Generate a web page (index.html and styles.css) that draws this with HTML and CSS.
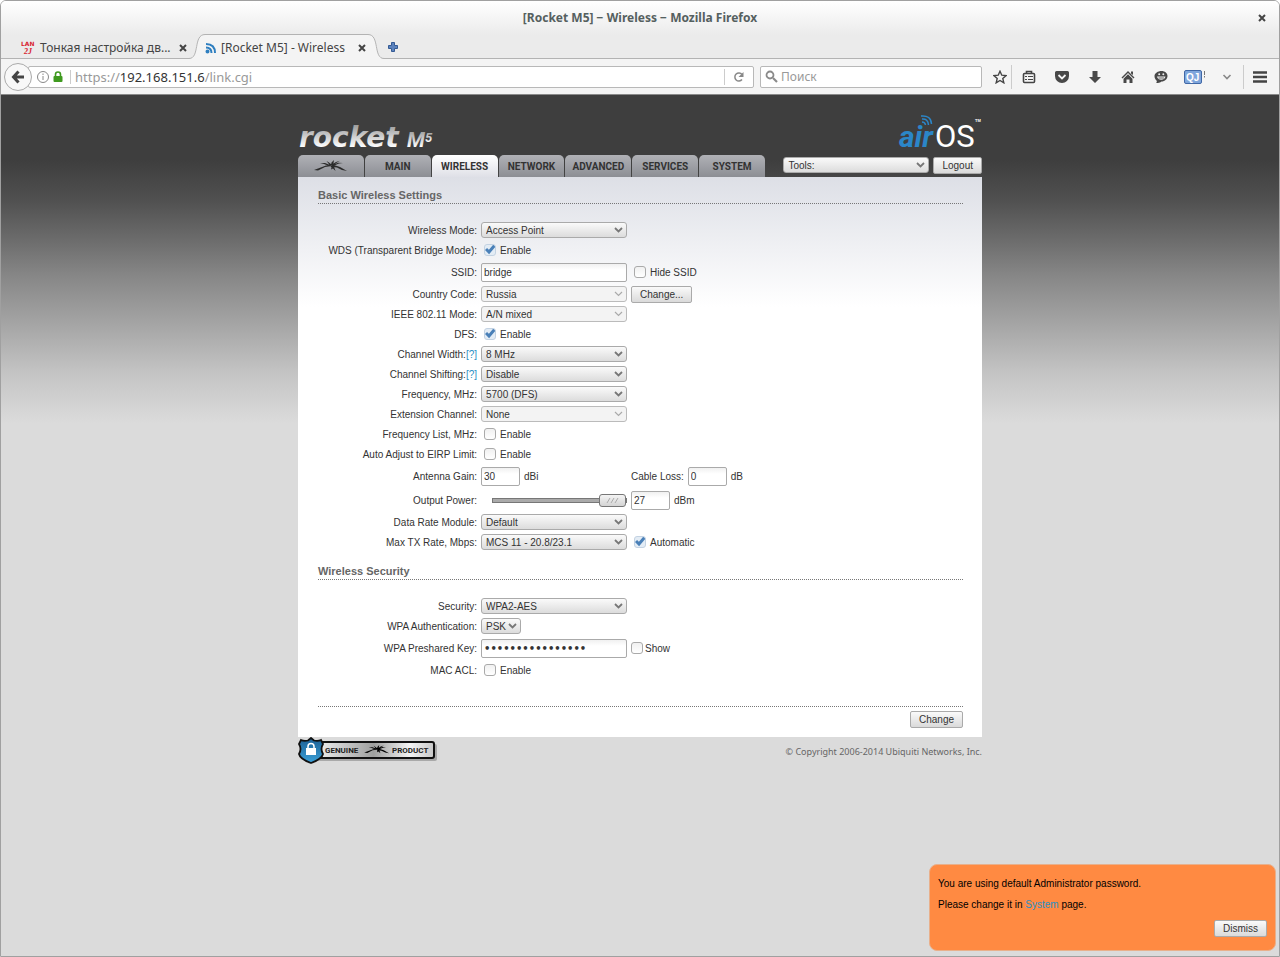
FILE: index.html
```html
<!DOCTYPE html>
<html lang="en">
<head>
    <meta charset="UTF-8">
    <meta name="viewport" content="width=device-width, initial-scale=1.0">
    <title>[Rocket M5] - Wireless</title>
    <link rel="stylesheet" href="styles.css">
</head>
<body>
    <svg width="0" height="0" class="defs" aria-hidden="true">
        <defs>
            <linearGradient id="silver" x1="0" y1="0" x2="0" y2="1">
                <stop offset="0" stop-color="#8a8a8a"/>
                <stop offset="0.8" stop-color="#ffffff"/>
            </linearGradient>
            <linearGradient id="plate" x1="0" y1="0" x2="1" y2="0">
                <stop offset="0" stop-color="#f4f4f4"/>
                <stop offset="0.5" stop-color="#9fa09f"/>
                <stop offset="0.8" stop-color="#f4f4f4"/>
                <stop offset="1" stop-color="#c8c8c8"/>
            </linearGradient>
            <linearGradient id="shield" x1="0" y1="0" x2="0" y2="1">
                <stop offset="0" stop-color="#1c5f94"/>
                <stop offset="1" stop-color="#3aa0d8"/>
            </linearGradient>
            <symbol id="bug" viewBox="0 0 34 12">
                <path d="M0 10L12 5.500L16 5L18 6L11 7L4 10.500ZM6 3L11 3L16 5L15 6L10 4ZM12.500 1L15 2.500L18 5L16 5.500ZM20 0L19.500 3L18.500 6L17 5L17.500 2.500ZM26 .800L23 2.500L19 5.500L18 4.500L22 2ZM29 3L25 3.500L19 6L19 5L24 2.800ZM17 5L20 5L26 7L33 11L28 10L23 7.500L19 7ZM16.500 6L19.500 6L20.500 8L21.500 11L19 8.500L17 9.500L17.500 7.500Z"/>
            </symbol>
        </defs>
    </svg>

    <div class="window">
        <!-- Browser chrome -->
        <header class="chrome">
            <div class="titlebar">
                <span class="title">[Rocket M5] − Wireless − Mozilla Firefox</span>
                <button class="close" aria-label="Close window">
                    <svg width="8" height="8" viewBox="0 0 8 8"><path d="M1 1L7 7M7 1L1 7" stroke="#444" stroke-width="2"/></svg>
                </button>
            </div>

            <div class="tabs">
                <div class="tab">
                    <svg width="15" height="14" viewBox="0 0 15 14" fill="#d8232f">
                        <text x="0" y="5" class="lan">LAN</text>
                        <text x="3" y="13" class="lan-sub">2J</text>
                    </svg>
                    <span class="tab-text">Тонкая настройка дв...</span>
                    <button class="close" aria-label="Close tab">
                        <svg width="8" height="8" viewBox="0 0 8 8"><path d="M1 1L7 7M7 1L1 7" stroke="#444" stroke-width="2"/></svg>
                    </button>
                </div>
                <svg class="curve" width="16" height="25" viewBox="0 0 16 25"><path d="M0 24.500C11 24.500 4 .500 16 .500V25H0Z" fill="#f4f4f4"/><path d="M0 24.500C11 24.500 4 .500 16 .500" fill="none" stroke="#b3b3b3"/></svg>
                <div class="tab active">
                    <svg width="12" height="12" viewBox="0 0 12 12" fill="none" stroke="#2f7fc0" stroke-width="2"><circle cx="2.500" cy="9.500" r="1"/><path d="M1 5.500Q6.500 5.500 6.500 11M1 2Q10 2 10 11"/></svg>
                    <span class="tab-text">[Rocket M5] - Wireless</span>
                    <button class="close" aria-label="Close tab">
                        <svg width="8" height="8" viewBox="0 0 8 8"><path d="M1 1L7 7M7 1L1 7" stroke="#444" stroke-width="2"/></svg>
                    </button>
                </div>
                <svg class="curve" width="16" height="25" viewBox="0 0 16 25"><path d="M16 24.500C5 24.500 12 .500 0 .500V25H16Z" fill="#f4f4f4"/><path d="M16 24.500C5 24.500 12 .500 0 .500" fill="none" stroke="#b3b3b3"/></svg>
                <button class="new-tab" aria-label="New tab">
                    <svg width="12" height="12" viewBox="0 0 12 12"><path d="M4.500 1.500h3v3h3v3h-3v3h-3v-3h-3v-3h3Z" fill="#5b82bd" stroke="#345a94"/></svg>
                </button>
            </div>

            <div class="toolbar">
                <button class="back" aria-label="Back">
                    <svg width="14" height="14" viewBox="0 0 14 14" fill="none" stroke="#444" stroke-width="3"><path d="M2.500 7H13M7.500 1.500L2.500 7L7.500 12.500"/></svg>
                </button>
                <div class="urlbar">
                    <svg width="12" height="12" viewBox="0 0 12 12" fill="none" stroke="#888"><circle cx="6" cy="6" r="5.500"/><path d="M6 5V9M6 2.500V4"/></svg>
                    <svg width="10" height="12" viewBox="0 0 10 12"><path d="M2.500 6V3.500a2.500 2.500 0 0 1 5 0V6" fill="none" stroke="#3f9a1f" stroke-width="1.600"/><rect x=".5" y="5" width="9" height="6" rx="1" fill="#3f9a1f"/></svg>
                    <div class="address">https://<b>192.168.151.6</b>/link.cgi</div>
                    <button class="reload" aria-label="Reload">
                        <svg width="12" height="12" viewBox="0 0 12 12"><path d="M9 8.500A4 4 0 1 1 9 3.500" fill="none" stroke="#888" stroke-width="1.500"/><path d="M10.500 1V6H5.500Z" fill="#888"/></svg>
                    </button>
                </div>
                <div class="search">
                    <svg width="13" height="13" viewBox="0 0 13 13" fill="none" stroke="#8a8a8a"><circle cx="5" cy="5" r="3.500" stroke-width="1.800"/><path d="M8 8L12 12" stroke-width="2.200"/></svg>
                    <input type="text" placeholder="Поиск" aria-label="Поиск">
                </div>
                <div class="icons">
                    <button class="star" aria-label="Bookmark">
                        <svg width="14" height="14" viewBox="0 0 14 14"><path d="M7 1.200L8.800 5.200L13 5.600L9.800 8.500L10.800 12.800L7 10.500L3.200 12.800L4.200 8.500L1 5.600L5.200 5.200Z" fill="none" stroke="#444" stroke-width="1.400"/></svg>
                    </button>
                    <button aria-label="Bookmarks list">
                        <svg width="14" height="14" viewBox="0 0 14 14" fill="none" stroke="#444"><rect x="1.500" y="3.500" width="11" height="9" rx="1" stroke-width="1.600"/><path d="M4.500 3V1.500h5V3" stroke-width="1.600"/><path d="M3 6.500h2M6 6.500h5M3 9.500h2M6 9.500h5"/></svg>
                    </button>
                    <button aria-label="Pocket">
                        <svg width="14" height="14" viewBox="0 0 14 14"><path d="M1.500 1h11a1.500 1.500 0 0 1 1.500 1.500V6a7 7 0 0 1-14 0V2.500A1.500 1.500 0 0 1 1.500 1Z" fill="#484848"/><path d="M3.500 5L7 8.500L10.500 5" fill="none" stroke="#f4f4f4" stroke-width="1.800"/></svg>
                    </button>
                    <button aria-label="Downloads">
                        <svg width="14" height="14" viewBox="0 0 14 14"><path d="M4.500 1h5v6H13L7 13L1 7h3.500Z" fill="#484848"/></svg>
                    </button>
                    <button aria-label="Home">
                        <svg width="14" height="14" viewBox="0 0 14 14"><path d="M7 1L13.500 7.500L12.500 8.500L7 3L1.500 8.500L.5 7.500Z" fill="#484848"/><path d="M7 4.200L11.500 8.700V13H8.500V9.500H5.500V13H2.500V8.700Z" fill="#484848"/><path d="M10 1.500h2V5L10 3.500Z" fill="#484848"/></svg>
                    </button>
                    <button aria-label="Chat">
                        <svg width="14" height="14" viewBox="0 0 14 14"><path d="M7.500 1C11 1 13.500 3.200 13.500 6S11 11.500 7.500 11.500C6.500 12.500 4 13 2 13C3 12.300 3 11.300 2.500 10.500C1 9 .5 7.500 .5 6C.5 3.200 4 1 7.500 1Z" fill="#484848"/><path d="M3 6.500H11.500Q10.500 9.800 7.200 9.800T3 6.500Z" fill="#eee"/><path d="M4.500 8H10" stroke="#484848" stroke-width=".800"/><circle cx="5.200" cy="4.300" r="1" fill="#eee"/><circle cx="9.300" cy="4.300" r="1" fill="#eee"/></svg>
                    </button>
                    <button aria-label="QuickJava">
                        <svg width="24" height="16" viewBox="0 0 24 16"><rect x="2.500" y="1.500" width="17" height="13" rx="1.500" fill="#7fa6dc" stroke="#4068a6"/><text x="4" y="12" class="qj">QJ</text><path d="M22.500 2V6M22.500 7V8.500" stroke="#777"/></svg>
                    </button>
                    <button aria-label="More">
                        <svg width="10" height="8" viewBox="0 0 10 8"><path d="M1.500 2L5 5.500L8.500 2" fill="none" stroke="#888" stroke-width="1.600"/></svg>
                    </button>
                    <button class="menu" aria-label="Menu">
                        <svg width="14" height="12" viewBox="0 0 14 12"><path d="M0 1.500h14M0 6h14M0 10.500h14" stroke="#444" stroke-width="2.400"/></svg>
                    </button>
                </div>
            </div>
        </header>

        <!-- airOS page -->
        <div class="page">
            <div class="content">
                <div class="logos">
                    <svg width="140" height="38" viewBox="0 0 140 38" role="img" aria-label="rocket M5">
                        <text x="1" y="30" class="rocket" fill="url(#silver)">rocket</text>
                        <text x="109" y="30" class="model" fill="url(#silver)">M</text>
                        <text x="127" y="25" class="model-num" fill="url(#silver)">5</text>
                    </svg>
                    <svg width="84" height="46" viewBox="0 0 84 46" role="img" aria-label="airOS">
                        <text x="1" y="38" class="air">air</text>
                        <text x="37" y="38" class="os">OS</text>
                        <text x="77" y="13" class="tm">TM</text>
                        <path d="M24 13Q27 13 27.500 16M24 10Q30 9.500 30.500 16M23 7Q33 6 33.500 15" fill="none" stroke="#2b86c8" stroke-width="1.500"/>
                    </svg>
                </div>

                <div class="topbar">
                    <nav class="nav">
                        <a href="#" aria-label="Ubiquiti"><svg width="34" height="12" fill="#2c2c2c"><use href="#bug"/></svg></a>
                        <a href="#">MAIN</a>
                        <a href="#" class="current">WIRELESS</a>
                        <a href="#">NETWORK</a>
                        <a href="#">ADVANCED</a>
                        <a href="#">SERVICES</a>
                        <a href="#">SYSTEM</a>
                    </nav>
                    <div class="tools">
                        <select aria-label="Tools"><option>Tools:</option></select>
                        <button class="btn">Logout</button>
                    </div>
                </div>

                <form class="panel">
                    <h2>Basic Wireless Settings</h2>
                    <div class="row">
                        <div class="name"><label for="mode">Wireless Mode:</label></div>
                        <select id="mode"><option>Access Point</option></select>
                    </div>
                    <div class="row">
                        <div class="name">WDS (Transparent Bridge Mode):</div>
                        <label class="check"><input type="checkbox" checked>Enable</label>
                    </div>
                    <div class="row tall">
                        <div class="name"><label for="ssid">SSID:</label></div>
                        <input type="text" id="ssid" value="bridge">
                        <label class="check"><input type="checkbox">Hide SSID</label>
                    </div>
                    <div class="row">
                        <div class="name"><label for="country">Country Code:</label></div>
                        <select id="country" disabled><option>Russia</option></select>
                        <div><button type="button" class="btn">Change...</button></div>
                    </div>
                    <div class="row">
                        <div class="name"><label for="ieee">IEEE 802.11 Mode:</label></div>
                        <select id="ieee" disabled><option>A/N mixed</option></select>
                    </div>
                    <div class="row">
                        <div class="name">DFS:</div>
                        <label class="check"><input type="checkbox" checked>Enable</label>
                    </div>
                    <div class="row">
                        <div class="name"><label for="width">Channel Width:</label><a href="#">[?]</a></div>
                        <select id="width"><option>8 MHz</option></select>
                    </div>
                    <div class="row">
                        <div class="name"><label for="shift">Channel Shifting:</label><a href="#">[?]</a></div>
                        <select id="shift"><option>Disable</option></select>
                    </div>
                    <div class="row">
                        <div class="name"><label for="freq">Frequency, MHz:</label></div>
                        <select id="freq"><option>5700 (DFS)</option></select>
                    </div>
                    <div class="row">
                        <div class="name"><label for="ext">Extension Channel:</label></div>
                        <select id="ext" disabled><option>None</option></select>
                    </div>
                    <div class="row">
                        <div class="name">Frequency List, MHz:</div>
                        <label class="check"><input type="checkbox">Enable</label>
                    </div>
                    <div class="row">
                        <div class="name">Auto Adjust to EIRP Limit:</div>
                        <label class="check"><input type="checkbox">Enable</label>
                    </div>
                    <div class="row tall">
                        <div class="name"><label for="gain">Antenna Gain:</label></div>
                        <div class="group"><input type="text" class="small" id="gain" value="30">dBi</div>
                        <div class="group"><label for="loss">Cable Loss:</label><input type="text" class="small" id="loss" value="0">dB</div>
                    </div>
                    <div class="row tall">
                        <div class="name"><label for="power">Output Power:</label></div>
                        <input type="range" id="power" min="0" max="27" value="27">
                        <div class="group"><input type="text" class="small" value="27" aria-label="Output power, dBm">dBm</div>
                    </div>
                    <div class="row">
                        <div class="name"><label for="rate">Data Rate Module:</label></div>
                        <select id="rate"><option>Default</option></select>
                    </div>
                    <div class="row">
                        <div class="name"><label for="mcs">Max TX Rate, Mbps:</label></div>
                        <select id="mcs"><option>MCS 11 - 20.8/23.1</option></select>
                        <label class="check"><input type="checkbox" checked>Automatic</label>
                    </div>

                    <h2>Wireless Security</h2>
                    <div class="row">
                        <div class="name"><label for="security">Security:</label></div>
                        <select id="security"><option>WPA2-AES</option></select>
                    </div>
                    <div class="row">
                        <div class="name"><label for="auth">WPA Authentication:</label></div>
                        <select id="auth" class="short"><option>PSK</option></select>
                    </div>
                    <div class="row tall">
                        <div class="name"><label for="key">WPA Preshared Key:</label></div>
                        <input type="password" id="key" value="0123456789abcdef">
                        <label class="check tight"><input type="checkbox">Show</label>
                    </div>
                    <div class="row">
                        <div class="name">MAC ACL:</div>
                        <label class="check"><input type="checkbox">Enable</label>
                    </div>

                    <div class="submit"><button type="button" class="btn">Change</button></div>
                </form>

                <footer class="footer">
                    <svg width="140" height="28" viewBox="0 0 140 28" role="img" aria-label="Genuine product">
                        <rect x="16" y="7" width="123" height="17" rx="2" fill="#a9a9a9"/>
                        <rect x="15" y="5" width="121" height="16" rx="2" fill="url(#plate)" stroke="#111" stroke-width="2"/>
                        <path d="M13 1L16 3.500Q20 4.500 23 3L25 7Q22 12 25 17Q24 22 13 26Q2 22 1 17Q4 12 1 7L3 3Q6 4.500 10 3.500Z" fill="url(#shield)" stroke="#111" stroke-width="1.800"/>
                        <path d="M10 12V9.500a3 3 0 0 1 6 0V12" fill="none" stroke="#fff" stroke-width="1.500"/>
                        <rect x="8" y="11" width="10" height="7" fill="#fff"/>
                        <text x="27" y="16" class="plate-text">GENUINE</text>
                        <use href="#bug" x="66" y="8" width="26" height="9"/>
                        <text x="94" y="16" class="plate-text">PRODUCT</text>
                    </svg>
                    <span>© Copyright 2006-2014 Ubiquiti Networks, Inc.</span>
                </footer>
            </div>

            <div class="notice">
                <p>You are using default Administrator password.</p>
                <p>Please change it in <a href="#">System</a> page.</p>
                <button class="btn">Dismiss</button>
            </div>
        </div>
    </div>
</body>
</html>
```

FILE: styles.css
```css
* {
    box-sizing: border-box;
}

body {
    margin: 0;
    background-color: #fff;
    font-family: "Liberation Sans", Arial, sans-serif;
    font-size: 10px;
    color: #333;
}

.defs {
    position: absolute;
}

svg {
    display: block;
    flex: none;
}

a {
    color: #2a8fc4;
    text-decoration: none;
}

button {
    display: flex;
    align-items: center;
    justify-content: center;
    border: none;
    padding: 0;
    background: none;
    font: inherit;
    color: inherit;
}

.window {
    display: flex;
    flex-direction: column;
    min-height: 100vh;
    border: 1px solid #a0a0a0;
    border-radius: 6px 6px 0 0;
    overflow: hidden;
}

/* Browser chrome */
.chrome {
    font-family: "Noto Sans", "Open Sans", sans-serif;
    font-size: 12px;
    color: #444;
    background: linear-gradient(#fff, #ebebeb 34px, #ebebeb);
}

.titlebar {
    display: grid;
    grid-template-columns: 1fr auto 1fr;
    align-items: center;
    height: 33px;
}

.title {
    grid-column: 2;
    font-weight: bold;
    color: #55605f;
}

.titlebar .close {
    justify-self: end;
    margin-right: 13px;
}

.tabs {
    display: flex;
    align-items: flex-end;
    height: 25px;
    padding-left: 20px;
    box-shadow: inset 0 -1px #b3b3b3;
}

.tab {
    display: flex;
    align-items: center;
    gap: 4px;
    height: 25px;
    width: 168px;
    padding-top: 2px;
}

.tab-text {
    white-space: nowrap;
}

.tab .close {
    margin-left: auto;
    padding-right: 2px;
}

.tab.active {
    width: 163px;
    padding-top: 1px;
    border-top: 1px solid #b3b3b3;
    background-color: #f4f4f4;
}

.lan {
    font: bold 6px "DejaVu Sans", sans-serif;
}

.lan-sub {
    font: italic bold 8px "Liberation Serif", serif;
}

.new-tab {
    height: 25px;
    padding: 0 3px;
}

.toolbar {
    display: flex;
    align-items: center;
    height: 36px;
    padding: 0 3px;
    background-color: #f4f4f4;
    border-bottom: 1px solid #8a8a8a;
}

.back {
    position: relative;
    width: 28px;
    height: 28px;
    margin-right: -4px;
    border: 1px solid #aaa;
    border-radius: 50%;
    background-color: #f8f8f8;
}

.urlbar,
.search {
    display: flex;
    align-items: center;
    height: 22px;
    border: 1px solid #b8b8b8;
    border-radius: 2px;
    background-color: #fff;
}

.urlbar {
    flex: 1;
    gap: 4px;
    padding-left: 8px;
}

.address {
    flex: 1;
    margin-left: 3px;
    padding-left: 4px;
    border-left: 1px solid #ccc;
    font-size: 13px;
    line-height: 14px;
    color: #999;
}

.address b {
    font-weight: normal;
    color: #333;
}

.reload {
    width: 29px;
    height: 16px;
    border-left: 1px solid #ccc;
}

.search {
    width: 222px;
    margin-left: 6px;
    padding: 0 4px;
    gap: 3px;
}

.search input {
    flex: 1;
    min-width: 0;
    border: none;
    padding: 0;
    background: none;
    font: inherit;
}

.search input::placeholder {
    color: #999;
}

.icons {
    display: flex;
    align-items: center;
    margin-left: 6px;
}

.icons button {
    width: 33px;
    height: 24px;
}

.icons .star {
    width: 24px;
    border-right: 1px solid #ccc;
}

.icons .menu {
    border-left: 1px solid #ccc;
}

.qj {
    font: bold 10px "Liberation Sans", sans-serif;
    fill: #fff;
}

/* airOS page */
.page {
    flex: 1;
    background: #dbdbdb linear-gradient(#3e3e3e, #3e3e3e 65px, #505050 105px, #6c6c6c 145px, #868686 180px, #a4a4a4 228px, #c4c4c4 278px, #dbdbdb 328px);
}

.content {
    max-width: 684px;
    margin: 0 auto;
}

.logos {
    display: flex;
    justify-content: space-between;
    align-items: flex-end;
    height: 60px;
}

.rocket {
    font: italic bold 28px "DejaVu Sans", sans-serif;
}

.model {
    font: italic bold 21px Roboto, sans-serif;
}

.model-num {
    font: italic bold 13px Roboto, sans-serif;
}

.air {
    font: italic bold 30px Roboto, sans-serif;
    fill: #2b86c8;
}

.os {
    font: 31px Roboto, sans-serif;
    fill: #fff;
}

.tm {
    font: bold 4px "Liberation Sans", sans-serif;
    fill: #fff;
}

.topbar {
    display: flex;
    justify-content: space-between;
}

.nav {
    display: flex;
    gap: 1px;
    width: 467px;
}

.nav a {
    display: flex;
    flex: 1;
    align-items: center;
    justify-content: center;
    height: 22px;
    border-radius: 5px 5px 0 0;
    background: linear-gradient(#b0b1b6, #8c8e94);
    font: bold 10px Roboto, sans-serif;
    color: #333;
}

.nav .current {
    background: linear-gradient(#fff, #dfe0e7);
}

.tools {
    display: flex;
    align-items: center;
    gap: 4px;
    padding-bottom: 2px;
}

.panel {
    padding: 11px 19px 9px 20px;
    background: linear-gradient(#dddfe6, #fff 130px);
}

.panel h2 {
    margin: 0 0 16px;
    border-bottom: 1px dotted #777;
    font-size: 11px;
    line-height: 15px;
    color: #666;
}

.row + h2 {
    margin-top: 12px;
}

.row {
    display: grid;
    grid-template-columns: 159px 146px 1fr;
    align-items: center;
    gap: 4px;
    height: 20px;
}

.row.tall {
    height: 24px;
}

.name {
    text-align: right;
    white-space: nowrap;
}

select {
    appearance: none;
    width: 146px;
    height: 16px;
    padding: 0 16px 0 4px;
    border: 1px solid #aaa;
    border-radius: 3px;
    background: url("data:image/svg+xml,%3Csvg xmlns='http://www.w3.org/2000/svg' width='9' height='6'%3E%3Cpath d='M1 1L4.500 4.500L8 1' fill='none' stroke='%23777' stroke-width='1.800'/%3E%3C/svg%3E") no-repeat right 3px center, linear-gradient(#fafafa, #dcdcdc);
    font: inherit;
    color: #333;
}

select:disabled {
    border-color: #bbb;
    background: url("data:image/svg+xml,%3Csvg xmlns='http://www.w3.org/2000/svg' width='9' height='6'%3E%3Cpath d='M1 1L4.500 4.500L8 1' fill='none' stroke='%23aaa' stroke-width='1.200'/%3E%3C/svg%3E") no-repeat right 3px center, #f3f3f3;
    opacity: 1;
}

select.short {
    width: 40px;
    padding-right: 0;
}

.row input[type="text"],
.row input[type="password"] {
    width: 146px;
    height: 19px;
    padding: 0 2px;
    border: 1px solid #aaa;
    border-radius: 2px;
    background: linear-gradient(#f0f0f0, #fff 6px);
    font: inherit;
    color: #333;
}

.row input[type="password"] {
    font-family: "DejaVu Sans", sans-serif;
    font-weight: bold;
}

.row input.small {
    width: 39px;
}

.group {
    display: flex;
    align-items: center;
    gap: 4px;
}

.check {
    display: flex;
    align-items: center;
    gap: 4px;
    padding-left: 3px;
}

.check.tight {
    gap: 2px;
    padding-left: 0;
}

input[type="checkbox"] {
    appearance: none;
    width: 12px;
    height: 12px;
    margin: 0;
    border: 1px solid #aaa;
    border-radius: 3px;
    background: linear-gradient(#f0f0f0, #fff);
}

input[type="checkbox"]:checked {
    border-color: #c3d2e2;
    background: url("data:image/svg+xml,%3Csvg xmlns='http://www.w3.org/2000/svg' width='12' height='12'%3E%3Cpath d='M2 5L5 8L10.500 1.500' fill='none' stroke='%234a80b8' stroke-width='3'/%3E%3C/svg%3E") no-repeat center, #e3ecf5;
}

input[type="range"] {
    appearance: none;
    width: 135px;
    height: 14px;
    margin: 0 0 0 11px;
    background: none;
}

input[type="range"]::-webkit-slider-runnable-track {
    height: 5px;
    border: 1px solid #777;
    background-color: #aaa;
}

input[type="range"]::-webkit-slider-thumb {
    appearance: none;
    width: 27px;
    height: 13px;
    margin-top: -5px;
    border: 1px solid #777;
    border-radius: 3px;
    background: url("data:image/svg+xml,%3Csvg xmlns='http://www.w3.org/2000/svg' width='13' height='5'%3E%3Cpath d='M1 5L4 0M5 5L8 0M9 5L12 0' stroke='%23aaa'/%3E%3C/svg%3E") no-repeat center, linear-gradient(#f4f4f4, #d4d4d4);
}

.btn {
    height: 17px;
    padding: 0 8px;
    border: 1px solid #aaa;
    border-radius: 2px;
    background: linear-gradient(#fafafa, #dadada);
    color: #333;
}

.submit {
    display: flex;
    justify-content: flex-end;
    margin-top: 26px;
    padding-top: 4px;
    border-top: 1px dotted #777;
}

.footer {
    display: flex;
    align-items: center;
    justify-content: space-between;
    font: 9px "Noto Sans", sans-serif;
    color: #666;
}

.plate-text {
    font: bold 8px Roboto, sans-serif;
    fill: #222;
}

.notice {
    position: fixed;
    right: 4px;
    bottom: 6px;
    display: flex;
    flex-direction: column;
    gap: 9px;
    width: 347px;
    padding: 13px 8px 13px;
    border: 1px solid #e8b08c;
    border-radius: 8px;
    background-color: #ff8a42;
    color: #000;
}

.notice p {
    margin: 0;
    line-height: 12px;
}

.notice .btn {
    align-self: flex-end;
}
```
